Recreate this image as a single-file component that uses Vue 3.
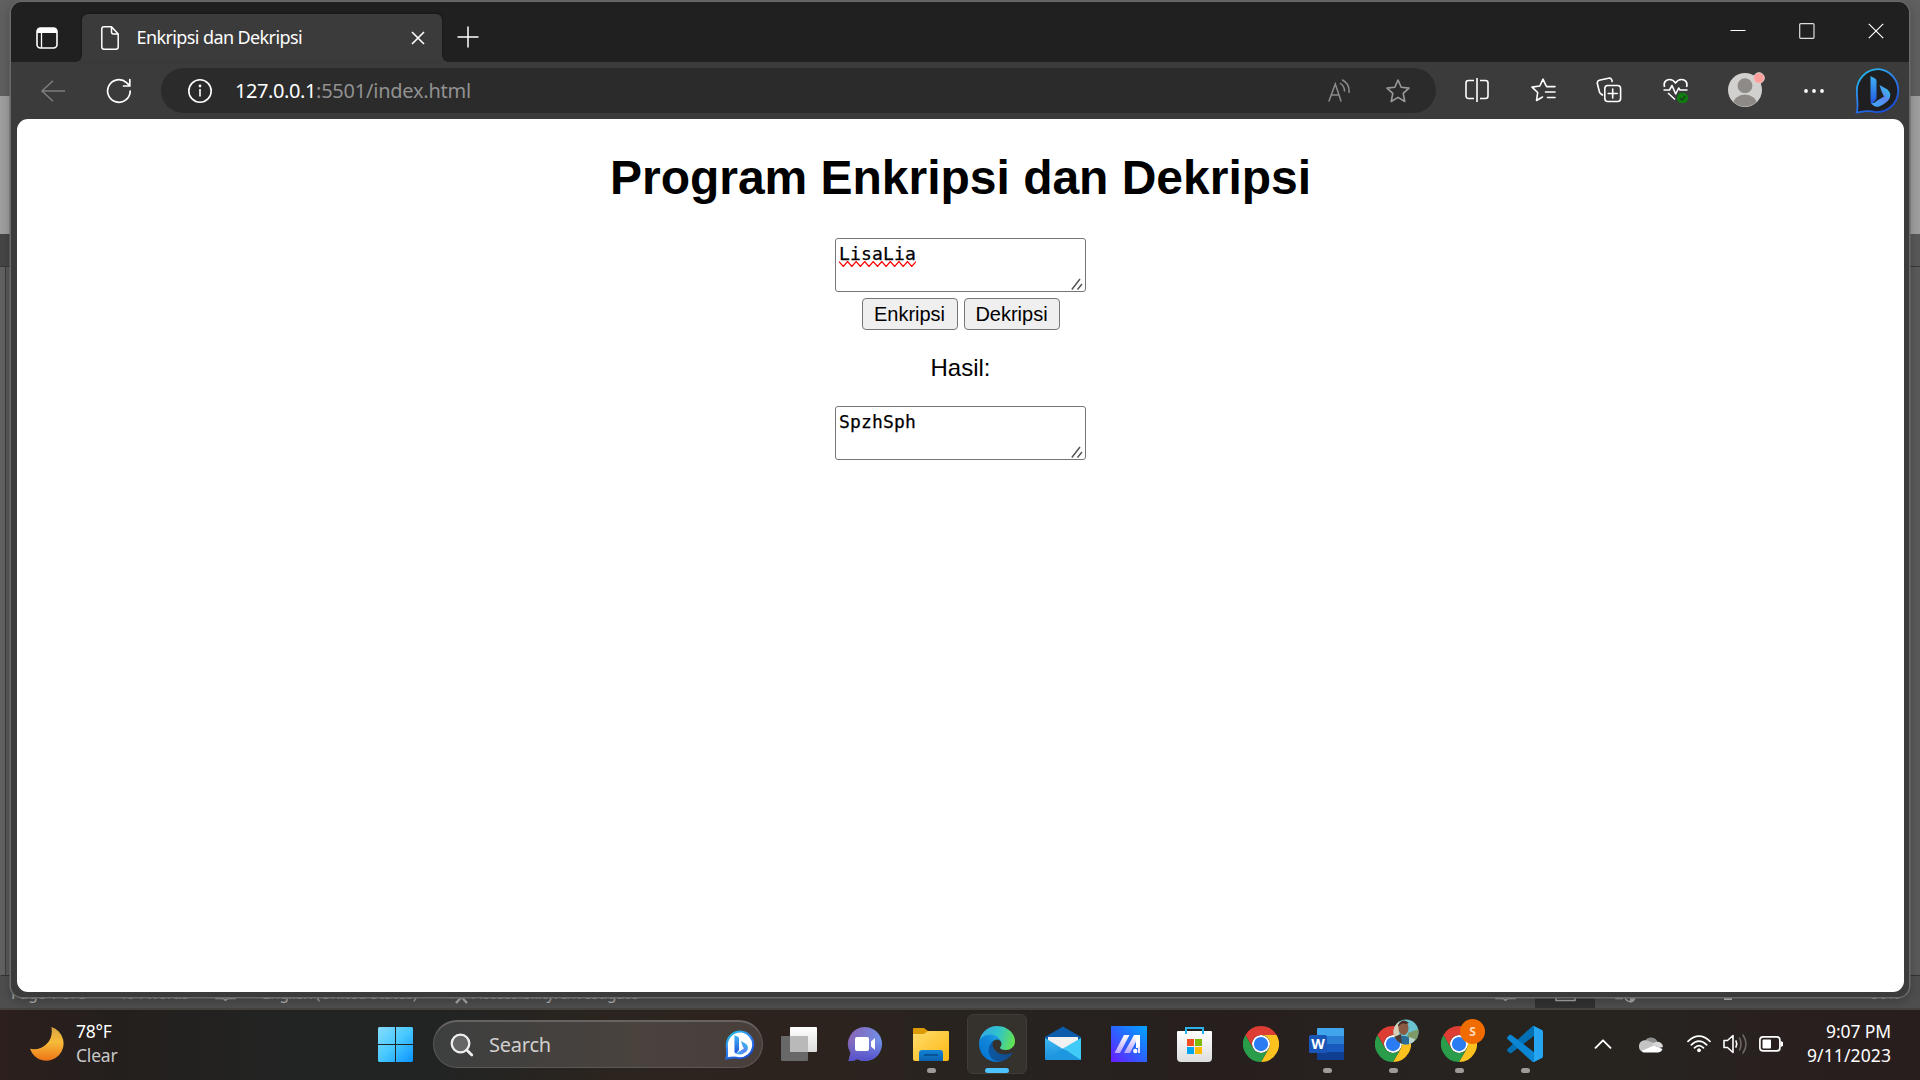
<script setup>
// Stretches or tightens a label so that it fills the given width in pixels.
const vFit = {
  mounted(el, { value }) {
    const width = el.getBoundingClientRect().width
    el.style.letterSpacing = `${(value - width) / el.textContent.length}px`
  },
}

const squiggle = 'M0 .6' + Array.from({ length: 18 }, (_, i) => `L${(i + 1) * 4.28} ${i % 2 ? 0.6 : 5.4}`).join('')

const apps = [
  { id: 'taskview' },
  { id: 'chat' },
  { id: 'files', open: true },
  { id: 'edge', open: true, active: true },
  { id: 'mail' },
  { id: 'asus' },
  { id: 'store' },
  { id: 'chrome' },
  { id: 'word', open: true },
  { id: 'chrome', open: true, badge: 'photo' },
  { id: 'chrome', open: true, badge: 's' },
  { id: 'code', open: true },
]
</script>

<template>
  <div class="screen">
    <svg width="0" height="0" class="defs">
      <defs>
        <linearGradient id="bingRing" x1="0" y1="0" x2="0.6" y2="1">
          <stop offset="0" stop-color="#1fc8e8" /><stop offset="0.5" stop-color="#2f86f0" /><stop offset="1" stop-color="#1a4fd8" />
        </linearGradient>
        <linearGradient id="bingStem" x1="0" y1="0" x2="0" y2="1">
          <stop offset="0" stop-color="#3fb4f7" /><stop offset="1" stop-color="#2153dc" />
        </linearGradient>
        <linearGradient id="bingBowl" x1="0" y1="1" x2="1" y2="0">
          <stop offset="0" stop-color="#3bb0ff" /><stop offset="0.55" stop-color="#5a86f0" /><stop offset="1" stop-color="#1fd6e6" />
        </linearGradient>
      </defs>
    </svg>

    <main class="workspace">
      <div class="backdrop">
        <div class="bd-title"></div>
        <div class="bd-ribbon"></div>
        <div class="bd-ruler"></div>
        <div class="bd-doc"></div>
        <div class="bd-status">
          <span class="st" style="left: 11px"><span v-fit="76">Page 1 of 3</span></span>
          <span class="st" style="left: 118px"><span v-fit="70">404 words</span></span>
          <svg class="st-icon" style="left: 215px" width="21" height="24" viewBox="0 0 21 24"><path d="M1 6V21.500H8.500L10.500 23.500L12.500 21.500H20V6" /></svg>
          <span class="st" style="left: 262px"><span v-fit="155">English (United States)</span></span>
          <svg class="st-icon thick" style="left: 447px" width="24" height="28" viewBox="0 0 24 28"><path d="M1 18L6 21M9 26L14.500 20L20 26" /></svg>
          <span class="st" style="left: 472px"><span v-fit="166">Accessibility: Investigate</span></span>
          <svg class="st-icon" style="left: 1495px" width="21" height="24" viewBox="0 0 21 24"><path d="M1 6V21.500H8.500L10.500 23.500L12.500 21.500H20V6" /></svg>
          <span class="st-sel"></span>
          <svg class="st-icon" style="left: 1555px" width="21" height="26" viewBox="0 0 21 26"><path d="M1 6V23.500H20V6Z" /></svg>
          <svg class="st-icon" style="left: 1615px" width="21" height="26" viewBox="0 0 21 26"><path d="M1 6V21.500H8" /><circle cx="15" cy="19.500" r="5" /><path d="M15 15A5 5 0 0 1 15 25" fill="#aaa" /></svg>
          <span class="st-thumb"></span>
          <span class="st" style="left: 1870px"><span v-fit="30">80%</span></span>
        </div>
      </div>

      <section class="browser">
        <header class="tabs">
          <div class="workspaces">
            <svg width="22" height="22" viewBox="0 0 22 22"><rect x="1" y="1" width="20" height="20" rx="3.500" fill="none" stroke="#fff" stroke-width="1.600" /><path d="M1 6V4a3 3 0 0 1 3-3h14a3 3 0 0 1 3 3v2z" fill="#fff" /><path d="M5.500 6V21" stroke="#fff" stroke-width="1.300" /></svg>
          </div>
          <div class="tab">
            <svg width="18" height="24" viewBox="0 0 18 24" fill="none" stroke="#fff" stroke-width="1.500" stroke-linejoin="round"><path d="M3 .8H10.500L17.200 8V21a2.200 2.200 0 0 1-2.200 2.200H3A2.200 2.200 0 0 1 .8 21V3A2.200 2.200 0 0 1 3 .8ZM10.500 .8V6a2 2 0 0 0 2 2h4.700" /></svg>
            <div class="tab-title"><span v-fit="165.500">Enkripsi dan Dekripsi</span></div>
            <svg width="14" height="14" viewBox="0 0 14 14" stroke="#fff" stroke-width="1.600"><path d="M1 1L13 13M13 1L1 13" /></svg>
          </div>
          <svg class="new-tab" width="22" height="22" viewBox="0 0 22 22" stroke="#fff" stroke-width="1.500"><path d="M11 .5V21.500M.5 11H21.500" /></svg>
          <div class="controls">
            <svg width="16" height="16" viewBox="0 0 16 16"><path d="M.5 7.500H15.500" stroke="#fff" /></svg>
            <svg width="16" height="16" viewBox="0 0 16 16"><rect x=".7" y=".7" width="14.300" height="14.600" rx="1" fill="none" stroke="#ddd" stroke-width="1.200" /></svg>
            <svg width="16" height="16" viewBox="0 0 16 16"><path d="M.8 .8L15.200 15.200M15.200 .8L.8 15.200" stroke="#fff" stroke-width="1.200" /></svg>
          </div>
        </header>

        <nav class="toolbar">
          <div class="cell back"><svg width="26" height="22" viewBox="0 0 26 22" fill="none" stroke="#7d7d7d" stroke-width="1.500"><path d="M13 .8L2 11L13 21.200M2 11H25" /></svg></div>
          <div class="cell reload"><svg width="26" height="26" viewBox="0 0 26 26" fill="none" stroke="#fff" stroke-width="1.700" stroke-linecap="round"><path d="M24.200 13A11.300 11.300 0 1 1 20.500 4.600L23.600 7.600M23.800 1.500V8H17.500" /></svg></div>
          <div class="address">
            <svg width="26" height="26" viewBox="0 0 26 26" fill="none" stroke="#fff" stroke-width="1.600"><circle cx="13" cy="13" r="11.200" /><path d="M13 11V18.500" /><circle cx="13" cy="8" r=".6" /></svg>
            <div class="url"><span class="host" v-fit="81">127.0.0.1</span><span v-fit="155">:5501/index.html</span></div>
            <svg class="aloud" width="26" height="24" viewBox="0 0 26 24" fill="none" stroke="#8c8c8c" stroke-width="1.500" stroke-linecap="round"><path d="M2 22L8.300 5L14 22M4.300 16H12M13.500 4.500C16.500 6.500 17.500 9 17.500 12M15.500 1C21 4 22.500 8.500 22 13.500" /></svg>
            <svg class="fav" width="26" height="26" viewBox="0 0 26 26" fill="none" stroke="#9a9a9a" stroke-width="1.600" stroke-linejoin="round"><path d="M13 2L16.200 9.200L24 10.100L18.200 15.400L19.800 23.500L13 19.400L6.200 23.500L7.800 15.400L2 10.100L9.800 9.200Z" /></svg>
          </div>
          <div class="cell action"><svg width="26" height="26" viewBox="0 0 26 26" fill="none" stroke="#fff" stroke-width="1.600"><path d="M13 1V25M10 3.500H4.500A2.500 2.500 0 0 0 2 6V19A2.500 2.500 0 0 0 4.500 21.500H10M16 3.500H21.500A2.500 2.500 0 0 1 24 6V19A2.500 2.500 0 0 1 21.500 21.500H16" /></svg></div>
          <div class="cell action"><svg width="26" height="26" viewBox="0 0 26 26" fill="none" stroke="#fff" stroke-width="1.600" stroke-linejoin="round" stroke-linecap="round"><path d="M16 8.700L13 2.200L9.800 9L2 10.100L7.700 15.500L6.500 23.500L12.500 20M16.500 9.600H25M15.500 15H25M17.500 20.500H25" /></svg></div>
          <div class="cell action"><svg width="26" height="26" viewBox="0 0 26 26" fill="none" stroke="#fff" stroke-width="1.600" stroke-linejoin="round" stroke-linecap="round"><path d="M6.500 18L4.500 16.500Q3.800 16 3.500 15L1.300 6.500Q1 4 3.200 3.300L12.500 1.200Q15 .8 15.800 3L16.200 4.500" /><rect x="8.800" y="8.500" width="15.800" height="16" rx="3" /><path d="M16.700 12V21M12.200 16.500H21.200" /></svg></div>
          <div class="cell action health"><svg width="28" height="26" viewBox="0 0 28 26" fill="none" stroke="#fff" stroke-width="1.600" stroke-linejoin="round"><path d="M2.500 10C1 5 4.500 2.500 7.500 2.500C10.500 2.500 12.500 4.500 13.500 6C14.500 4.500 16.500 2.500 19.500 2.500C23 2.500 26 5 24.600 10M1.500 13H7.500L10 8.500L13.700 17L16.700 11L18 13H25.500M6 16L13 22.500" /><circle cx="20.500" cy="21" r="5.600" fill="#0f7b0f" stroke="none" /><path d="M18 21.300L19.800 23L23.300 19" stroke="#1d3a1d" stroke-width="1.200" /></svg></div>
          <div class="cell avatar">
            <svg width="38" height="38" viewBox="0 0 38 38"><defs><clipPath id="face"><circle cx="18" cy="20" r="16.500" /></clipPath></defs><circle cx="18" cy="20" r="17" fill="#d2d0ce" /><g clip-path="url(#face)" fill="#8d8a87"><circle cx="18" cy="15.700" r="7.400" /><ellipse cx="18" cy="34.500" rx="12" ry="10" /></g><circle cx="32" cy="8" r="5.300" fill="#ff9f9b" stroke="#e3cfcb" /></svg>
          </div>
          <div class="cell more"><svg width="22" height="6" viewBox="0 0 22 6" fill="#fff"><circle cx="3" cy="3" r="1.900" /><circle cx="11" cy="3" r="1.900" /><circle cx="19" cy="3" r="1.900" /></svg></div>
          <div class="cell bing">
            <svg width="46" height="46" viewBox="0 0 46 46"><path d="M23.500 1.200A21.400 21.400 0 1 1 20 44C14 42 8 43.500 1.800 44.500C3.500 39 2 32 1.800 23A21.600 21.600 0 0 1 23.500 1.200Z" fill="#1f1f21" stroke="url(#bingRing)" stroke-width="1.800" /><path d="M15.500 8L20 10.500Q21.500 11.300 21.500 13V30.500L17 36.500Q15.500 35 15.500 32.500Z" fill="url(#bingStem)" /><path d="M24.500 17L32.500 21.500Q36.500 25 34.500 30.500Q32 35 24 38.500Q19 39.500 16 35Q19 36 21.500 33L29 28.500L26.500 23.500Z" fill="url(#bingBowl)" /></svg>
          </div>
        </nav>

        <article class="page">
          <h1><span v-fit="701">Program Enkripsi dan Dekripsi</span></h1>
          <div class="field">
            <span v-fit="77">LisaLia</span>
            <svg class="squiggle" width="77" height="6" viewBox="0 0 77 6" fill="none" stroke="#f00" stroke-width="1.300"><path :d="squiggle" /></svg>
            <svg class="grip" width="12" height="12" viewBox="0 0 12 12" stroke="#555" stroke-width="1.500"><path d="M.8 11.500L9 1M6.500 11.500L11 6" /></svg>
          </div>
          <div class="buttons">
            <button type="button">Enkripsi</button>
            <button type="button">Dekripsi</button>
          </div>
          <p>Hasil:</p>
          <div class="field">
            <span v-fit="77">SpzhSph</span>
            <svg class="grip" width="12" height="12" viewBox="0 0 12 12" stroke="#555" stroke-width="1.500"><path d="M.8 11.500L9 1M6.500 11.500L11 6" /></svg>
          </div>
        </article>
      </section>
    </main>

    <footer class="taskbar">
      <div class="weather">
        <svg width="36" height="36" viewBox="0 0 36 36"><defs><linearGradient id="moon" x1="0" y1="0" x2="0" y2="1"><stop offset="0" stop-color="#d9a441" /><stop offset=".45" stop-color="#f6bb3a" /><stop offset="1" stop-color="#ee7416" /></linearGradient></defs><path d="M22.300 1A17.200 17.200 0 1 1 1 22.800C14 25.500 25.500 14 22.300 1Z" fill="url(#moon)" /></svg>
        <div class="lines"><div class="bright"><span v-fit="35.500">78°F</span></div><div><span v-fit="41.500">Clear</span></div></div>
      </div>

      <div class="start">
        <svg width="35" height="35" viewBox="0 0 35 35"><defs><linearGradient id="win" gradientUnits="userSpaceOnUse" x1="0" y1="0" x2="35" y2="35"><stop offset="0" stop-color="#86dcff" /><stop offset=".5" stop-color="#47c8ff" /><stop offset="1" stop-color="#0a93ff" /></linearGradient></defs><path d="M1 0H17V17H0V1ZM18 0H34L35 1V17H18ZM0 18H17V35H1L0 34ZM18 18H35V34L34 35H18Z" fill="url(#win)" /></svg>
      </div>

      <div class="search">
        <svg width="24" height="24" viewBox="0 0 24 24" fill="#666" stroke="#efefef" stroke-width="2.300" stroke-linecap="round"><circle cx="10.500" cy="10.500" r="8.800" /><path d="M16.800 17L21.800 22" stroke-width="2.800" /></svg>
        <div class="search-label"><span v-fit="62">Search</span></div>
        <svg width="30" height="30" viewBox="0 0 46 46"><path d="M23.500 2.200A20.500 20.500 0 1 1 20 43C14 41 8 42.500 2.200 43.500C4 38 3 32 2.800 23A20.600 20.600 0 0 1 23.500 2.200Z" fill="#fff" stroke="url(#bingRing)" stroke-width="3.200" /><path d="M14.500 8L20 10.500Q21.500 11.300 21.500 13V30.500L17 36.500Q14.500 35 14.500 32.500Z" fill="url(#bingStem)" /><path d="M24.500 17L32.500 21.500Q36.500 25 34.500 30.500Q32 35 24 37.500Q19 38.500 16 35Q19 36 21.500 33L29 28.500L26.500 23.500Z" fill="url(#bingBowl)" /></svg>
      </div>

      <div class="apps">
        <div v-for="(app, i) in apps" :key="i" class="app" :class="{ active: app.active }">
          <svg v-if="app.id === 'taskview'" width="36" height="36" viewBox="0 0 36 36"><defs><linearGradient id="tv" x1="0" y1="0" x2="0" y2="1"><stop offset="0" stop-color="#fff" /><stop offset="1" stop-color="#dcdcdc" /></linearGradient></defs><rect x="0" y="10" width="27" height="25" rx="1" fill="#686868" /><rect x="9" y="1" width="27" height="25" rx="1" fill="url(#tv)" /><path d="M9 10H27V26H10L9 25Z" fill="#b9b9b9" /></svg>

          <svg v-else-if="app.id === 'chat'" width="36" height="36" viewBox="0 0 36 36"><defs><linearGradient id="chat" x1="0" y1="0" x2="1" y2=".3"><stop offset="0" stop-color="#8a5fb0" /><stop offset="1" stop-color="#7091ea" /></linearGradient><linearGradient id="chat2" x1="0" y1="0" x2="0" y2="1"><stop offset=".4" stop-color="#5b55c8" stop-opacity="0" /><stop offset="1" stop-color="#5650cc" /></linearGradient></defs><path d="M18 1A17 17 0 1 1 10 33C7 35 4 35 1.500 35L3.500 27A17 17 0 0 1 18 1Z" fill="url(#chat)" /><path d="M18 1A17 17 0 1 1 10 33C7 35 4 35 1.500 35L3.500 27A17 17 0 0 1 18 1Z" fill="url(#chat2)" /><rect x="8" y="11" width="14" height="14" rx="2" fill="#fff" /><path d="M24 15.500L28 12V24L24 20.500Z" fill="#fff" /></svg>

          <svg v-else-if="app.id === 'files'" width="36" height="36" viewBox="0 0 36 36"><defs><linearGradient id="fold" x1="0" y1="0" x2="1" y2="1"><stop offset="0" stop-color="#ffdc6b" /><stop offset="1" stop-color="#fdb813" /></linearGradient><linearGradient id="dock" x1="0" y1="0" x2="0" y2="1"><stop offset="0" stop-color="#1283d8" /><stop offset="1" stop-color="#0b62ad" /></linearGradient></defs><path d="M0 3Q0 2 1 2H11L15 5V10H0Z" fill="#dc9b05" /><path d="M0 8H11L15 5H35Q36 5 36 6V33Q36 35 34 35H2Q0 35 0 33Z" fill="url(#fold)" /><path d="M6 35V27Q6 24 9 24H27Q30 24 30 27V35Z" fill="url(#dock)" /><path d="M11 29H25" stroke="#064a86" stroke-width="1.500" /></svg>

          <svg v-else-if="app.id === 'edge'" width="36" height="36" viewBox="4.600 4.900 256 256"><defs><linearGradient id="eA" gradientUnits="userSpaceOnUse" x1="63" y1="182" x2="241" y2="182"><stop offset="0" stop-color="#0c59a4" /><stop offset="1" stop-color="#114a8b" /></linearGradient><linearGradient id="eB" gradientUnits="userSpaceOnUse" x1="157" y1="104" x2="46" y2="225"><stop offset="0" stop-color="#1b9de2" /><stop offset=".4" stop-color="#1186d8" /><stop offset="1" stop-color="#0678d4" /></linearGradient><linearGradient id="eC" gradientUnits="userSpaceOnUse" x1="20" y1="60" x2="255" y2="130"><stop offset="0" stop-color="#35aadf" /><stop offset=".45" stop-color="#2fc2cf" /><stop offset="1" stop-color="#66e34c" /></linearGradient></defs><path d="M235.680 195.460a93.730 93.730 0 0 1-10.540 4.710 101.870 101.870 0 0 1-35.900 6.460c-47.320 0-88.540-32.550-88.540-74.320A31.480 31.480 0 0 1 117.130 105c-42.800 1.800-53.800 46.400-53.800 72.530 0 73.880 68.090 81.370 82.760 81.370 7.910 0 19.840-2.300 27-4.560l1.310-.44a128.340 128.340 0 0 0 66.600-52.800 4 4 0 0 0-5.320-5.640z" fill="url(#eA)" /><path d="M110.340 246.340A79.200 79.200 0 0 1 87.600 225a80.720 80.720 0 0 1 29.530-120c3.120-1.470 8.450-4.130 15.540-4a32.350 32.350 0 0 1 25.690 13 31.880 31.880 0 0 1 6.360 18.660c0-.21 24.460-79.600-80-79.600-43.900 0-80 41.660-80 78.210a130.150 130.150 0 0 0 12.110 56 128 128 0 0 0 156.380 67.110 75.550 75.550 0 0 1-62.780-8z" fill="url(#eB)" /><path d="M156.940 153.780c-.81 1.050-3.300 2.500-3.300 5.660 0 2.610 1.700 5.120 4.720 7.230 14.380 10 41.490 8.680 41.560 8.680a59.560 59.560 0 0 0 30.270-8.350 61.380 61.380 0 0 0 30.430-52.880c.26-22.410-8-37.310-11.340-43.910-21.190-41.450-66.930-65.290-116.670-65.290a128 128 0 0 0-128 126.200c.48-36.540 36.800-66.050 80-66.050 3.500 0 23.460.34 42 10.070 16.340 8.580 24.900 18.940 30.850 29.210 6.180 10.670 7.280 24.150 7.280 29.520s-2.740 13.330-7.800 19.910z" fill="url(#eC)" /></svg>

          <svg v-else-if="app.id === 'mail'" width="36" height="36" viewBox="0 0 36 36"><defs><linearGradient id="ml" x1="0" y1="0" x2="0" y2="1"><stop offset="0" stop-color="#3bb8f2" /><stop offset="1" stop-color="#1a8fdc" /></linearGradient></defs><path d="M0 11L18 .5L36 11V14H0Z" fill="#0b5cab" /><path d="M3 11H33V15L18 26L3 15Z" fill="#f1f1f1" /><path d="M0 12L36 34H1Q0 34 0 33Z" fill="url(#ml)" /><path d="M36 12V33Q36 34 35 34L18 22.500Z" fill="#3fcaf8" /><path d="M18 22.500L36 34H1L18 22.500Z" fill="#1d97e0" /></svg>

          <svg v-else-if="app.id === 'asus'" width="36" height="36" viewBox="0 0 36 36"><defs><linearGradient id="as" x1="0" y1="1" x2="1" y2="0"><stop offset="0" stop-color="#6a1cff" /><stop offset=".5" stop-color="#2b63ff" /><stop offset="1" stop-color="#00a5ff" /></linearGradient><linearGradient id="as2" x1="0" y1="1" x2="0" y2="0"><stop offset="0" stop-color="#b9a2ff" /><stop offset="1" stop-color="#fff" /></linearGradient></defs><rect width="36" height="36" fill="url(#as)" /><path d="M3.500 27L13 9H18.500L9 27ZM13 27L23 9H28.500L19 27Z" fill="url(#as2)" /><path d="M23.500 9H29V22H25V14Z" fill="#fff" /><circle cx="24.300" cy="25" r="2.200" fill="#fff" /><path d="M27 21H29V27H27Z" fill="#e8e0ff" /></svg>

          <svg v-else-if="app.id === 'store'" width="36" height="36" viewBox="0 0 36 36"><defs><linearGradient id="sto" x1="0" y1="0" x2="0" y2="1"><stop offset="0" stop-color="#fff" /><stop offset="1" stop-color="#dedede" /></linearGradient></defs><path d="M0 6Q0 5 1 5H34Q35 5 35 6V32Q35 36 31 36H4Q0 36 0 32Z" fill="url(#sto)" /><path d="M9 8V2H26V8" fill="none" stroke="#2cb2ea" stroke-width="2" /><path d="M10 13H17V20H10Z" fill="#f25022" /><path d="M18 13H25V20H18Z" fill="#7fba00" /><path d="M10 21H17V28H10Z" fill="#00a4ef" /><path d="M18 21H25V28H18Z" fill="#ffb900" /></svg>

          <svg v-else-if="app.id === 'chrome'" width="36" height="36" viewBox="0 0 48 48"><circle cx="24" cy="24" r="12" fill="#fff" /><path d="M24,12H44.7812a23.9939,23.9939,0,0,0-41.5639.0029L13.6079,30l.0093-.0024A11.9852,11.9852,0,0,1,24,12Z" fill="#de3d33" /><circle cx="24" cy="24" r="9.500" fill="#2b7bf3" /><path d="M34.3913,30.0029,24.0007,48A23.994,23.994,0,0,0,44.78,12.0031H23.9989l-.0025.0093A11.985,11.985,0,0,1,34.3913,30.0029Z" fill="#fbc11f" /><path d="M13.6086,30.0031,3.218,12.006A23.994,23.994,0,0,0,24.0025,48L34.3931,30.0029l-.0067-.0068a11.9852,11.9852,0,0,1-20.7778.007Z" fill="#2a9d4b" /></svg>

          <div v-else-if="app.id === 'word'" class="word">
            <svg width="36" height="36" viewBox="0 0 36 36"><path d="M8 3Q8 2 9 2H34Q35 2 35 3V10H8Z" fill="#41a5ee" /><path d="M8 10H35V18H8Z" fill="#2b7cd3" /><path d="M8 18H35V26H8Z" fill="#185abd" /><path d="M8 26H35V33Q35 34 34 34H9Q8 34 8 33Z" fill="#103f91" /><rect x="0" y="9" width="18" height="18" rx="1.500" fill="#1a56b8" /></svg>
            <b>W</b>
          </div>

          <svg v-else width="36" height="36" viewBox="0 0 100 100"><path d="M96.461 10.796L75.857 .876C73.472 -.273 70.622 .212 68.750 2.083L1.299 63.583C-.516 65.237 -.514 68.094 1.303 69.745L6.813 74.754C8.298 76.104 10.535 76.204 12.134 74.991L93.361 13.370C96.086 11.303 100 13.246 100 16.667V16.428C100 14.027 98.625 11.838 96.461 10.796Z" fill="#0070b3" /><path d="M96.461 89.204L75.857 99.125C73.472 100.273 70.622 99.788 68.750 97.917L1.299 36.417C-.516 34.763 -.514 31.906 1.303 30.255L6.813 25.246C8.298 23.896 10.535 23.796 12.134 25.010L93.361 86.630C96.086 88.697 100 86.754 100 83.333V83.573C100 85.974 98.625 88.162 96.461 89.204Z" fill="#0a86d4" /><path d="M75.858 99.126C73.472 100.274 70.622 99.789 68.750 97.917C71.056 100.223 75 98.590 75 95.328V4.672C75 1.410 71.056 -.223 68.750 2.083C70.622 .211 73.472 -.274 75.858 .874L96.459 10.781C98.623 11.822 100 14.011 100 16.413V83.587C100 85.989 98.623 88.179 96.459 89.220L75.858 99.126Z" fill="#26a5f2" /></svg>

          <svg v-if="app.badge === 'photo'" class="badge" width="26" height="26" viewBox="0 0 26 26"><defs><clipPath id="ph"><circle cx="13" cy="13" r="12.500" /></clipPath></defs><g clip-path="url(#ph)"><rect width="26" height="26" fill="#6cc3d0" /><path d="M0 8L6 2V22H0Z" fill="#d8cdb6" /><path d="M15 14L26 10V22H14Z" fill="#7d9a68" /><ellipse cx="10.500" cy="9" rx="5" ry="7" fill="#8a5a44" /><path d="M5 6Q10 -2 16 4L13 5Q8 3 5 8Z" fill="#4a2d25" /><path d="M3 26Q5 15 11 17Q18 17 19 26Z" fill="#2b6c96" /><path d="M1 18L8 15L9 26H3Z" fill="#4a3b34" /><path d="M16 18L22 20L20 25H16Z" fill="#b9d3cd" /></g></svg>
          <div v-if="app.badge === 's'" class="badge s-badge">S</div>
          <i v-if="app.open" class="dot"></i>
        </div>
      </div>

      <div class="tray">
        <svg class="chev" width="18" height="10" viewBox="0 0 18 10" fill="none" stroke="#fff" stroke-width="1.900" stroke-linecap="round" stroke-linejoin="round"><path d="M1.500 8.800L9 1.300L16.500 8.800" /></svg>
        <svg class="cloud" width="24" height="17" viewBox="0 0 24 17"><path d="M6 5A7 7 0 0 1 18.500 6L12 11Z" fill="#8f8f8f" /><path d="M0 11A6 6 0 0 1 8 4.600Q14 6 18 10L5 16A5 5 0 0 1 0 11Z" fill="#c4c4c4" /><path d="M17 6A5.500 5.500 0 0 1 24 11L20 12L13 7.500Z" fill="#d8d8d8" /><path d="M2.500 15L15 9.500L23.500 13Q22.500 16 19 16.500H5.500Q3.500 16.500 2.500 15Z" fill="#fff" /></svg>
        <svg class="wifi" width="24" height="18" viewBox="0 0 24 18" fill="none" stroke="#fff" stroke-width="1.700" stroke-linecap="round"><path d="M1 6.300Q12 -4 23 6.300M4.300 9.800Q12 2.500 19.700 9.800M7.500 12.800Q12 8.300 16.500 12.800" /><circle cx="12" cy="15.300" r="1.500" fill="#fff" stroke-width="1" /></svg>
        <svg class="vol" width="26" height="22" viewBox="0 0 26 22" fill="none" stroke-width="1.600" stroke-linecap="round" stroke-linejoin="round"><path d="M1 7.500H4.500L10 2.500V19.500L4.500 14.500H1ZM13 8Q14.600 11 13 14" stroke="#fff" /><path d="M16.500 5Q19.500 11 16.500 17M20 2Q26 11 20 20" stroke="#6c6866" /></svg>
        <svg class="batt" width="25" height="16" viewBox="0 0 25 16"><rect x=".9" y=".9" width="20" height="14" rx="3.200" fill="none" stroke="#fff" stroke-width="1.700" /><rect x="3.500" y="3.500" width="8.500" height="9" rx="1" fill="#fff" /><path d="M21.500 5L24 6V10L21.500 11Z" fill="#fff" /></svg>
        <div class="clock"><div><span v-fit="65">9:07 PM</span></div><div><span v-fit="84">9/11/2023</span></div></div>
      </div>
    </footer>
  </div>
</template>

<style>
body {
  margin: 0;
  background: #222;
}
</style>

<style scoped>
.screen {
  width: 1920px;
  height: 1080px;
  display: flex;
  flex-direction: column;
  overflow: hidden;
  font-family: "Noto Sans", "Open Sans", sans-serif;
  color: #fff;
  white-space: nowrap;
}
.defs { position: absolute; }
svg { display: block; flex: none; }
span { display: inline-block; }

.workspace {
  position: relative;
  height: 1010px;
  box-sizing: border-box;
  padding: 2px 11px 13px;
  flex: none;
}
.backdrop {
  position: absolute;
  inset: 0;
  display: flex;
  flex-direction: column;
  overflow: hidden;
}
.bd-title { height: 96px; background: #606060; }
.bd-ribbon { height: 138px; background: #9f9f9f; }
.bd-ruler { height: 32px; background: linear-gradient(90deg, #464646 50%, #595959 50%); border-bottom: 1px solid #383838; }
.bd-doc { height: 708px; background: #5a5a5a; border-left: 1px solid #606060; box-shadow: inset 4px 0 #626262, inset 5px 0 #3c3c3c; border-bottom: 1px solid #333; }
.bd-status { position: relative; flex: 1; background: #4e4e4e; border-bottom: 2px solid #45423e; }
.st { position: absolute; top: 6px; font-size: 15.500px; line-height: 22px; color: #b0b0b0; }
.st-icon { position: absolute; top: 1px; fill: none; stroke: #aaa; stroke-width: 1.500; }
.st-icon.thick { stroke-width: 2.500; }
.st-sel { position: absolute; left: 1535px; top: 0; width: 60px; height: 32px; background: #323232; }
.st-thumb { position: absolute; left: 1724px; top: 10px; width: 8px; height: 14px; background: #bbb; }

.browser {
  position: relative;
  height: 995px;
  display: flex;
  flex-direction: column;
  background: #3b3b3b;
  border-radius: 11px;
  box-shadow: 0 0 0 1.500px #6a6a6a, 0 3px 12px rgba(0, 0, 0, .3);
  overflow: visible;
}
.tabs {
  height: 60px;
  flex: none;
  display: flex;
  background: #202020;
  border-radius: 11px 11px 0 0;
  padding-right: 25px;
}
.workspaces { width: 71px; box-sizing: border-box; padding: 25px 0 0 25px; }
.tab {
  position: relative;
  width: 360px;
  height: 48px;
  box-sizing: border-box;
  margin-top: 12px;
  padding: 0 17px 0 19px;
  display: flex;
  align-items: center;
  background: #3b3b3b;
  border-radius: 6px 6px 0 0;
  box-shadow: 0 -1px 3px rgba(0, 0, 0, .35);
}
.tab::before,
.tab::after {
  content: "";
  position: absolute;
  bottom: 0;
  width: 6px;
  height: 6px;
}
.tab::before { left: -6px; background: radial-gradient(circle at 0 0, #202020 5.500px, #3b3b3b 6px); }
.tab::after { right: -6px; background: radial-gradient(circle at 100% 0, #202020 5.500px, #3b3b3b 6px); }
.tab-title { flex: 1; margin: 0 0 2px 17.500px; font-size: 18px; line-height: 24px; }
.new-tab { margin: 24px 0 0 15px; }
.controls { margin: 21px 0 0 auto; display: flex; gap: 53px; }

.toolbar { height: 57px; flex: none; display: flex; align-items: center; }
.cell { display: flex; justify-content: center; align-items: center; }
.back { width: 84px; }
.reload { width: 48px; margin-right: 18px; }
.address {
  width: 1275px;
  height: 45px;
  box-sizing: border-box;
  display: flex;
  align-items: center;
  padding: 0 25px 0 26px;
  background: #2b2b2b;
  border-radius: 23px;
  margin-right: 8px;
}
.url { flex: 1; margin-left: 22px; font-size: 20px; line-height: 28px; color: #919191; }
.url .host { color: #fff; }
.aloud { margin-right: 32px; }
.action { width: 66px; }
.action svg { margin-bottom: 1px; }
.health svg { margin-left: 1px; }
.avatar { width: 73px; }
.avatar svg { margin: 0 0 3px 2px; }
.more { width: 65px; }
.bing { width: 63px; }

.page {
  flex: 1;
  margin: 0 5px 5px 6px;
  border-radius: 11px;
  background: #fff;
  color: #000;
  font-family: "Liberation Sans", Arial, sans-serif;
  font-size: 24px;
  display: flex;
  flex-direction: column;
  align-items: center;
}
h1 { margin: 31px 0 33px; font-size: 48px; line-height: 55px; font-weight: bold; }
p { margin: 24px 0; line-height: 28px; }
.field {
  position: relative;
  width: 251px;
  height: 54px;
  box-sizing: border-box;
  border: 1px solid #767676;
  border-radius: 3px;
  padding: 4px 3px;
  font-family: "DejaVu Sans Mono", monospace;
  font-size: 18px;
  line-height: 22px;
  -webkit-text-stroke: .25px #000;
}
.squiggle { position: absolute; left: 3px; top: 22px; }
.grip { position: absolute; right: 2px; bottom: 1px; }
.buttons { display: flex; gap: 6px; margin-top: 6px; }
button {
  width: 96px;
  height: 32px;
  padding: 0;
  box-sizing: border-box;
  border: 1px solid #767676;
  border-radius: 4px;
  background: #efefef;
  color: #000;
  font: 20px/28px "Liberation Sans", Arial, sans-serif;
}

.taskbar {
  height: 70px;
  flex: none;
  display: flex;
  background: linear-gradient(90deg, #2c1f1d 0, #241f1d 110px, #222423 290px, #222423 440px, #2c241e 620px, #2d231e 800px, #27231f 1000px, #271f1e 1230px, #272420 1480px, #272420 1640px, #291e1e 1840px, #291e1e 100%);
}
.weather { width: 347px; padding-left: 29px; display: flex; box-sizing: border-box; }
.weather svg { margin-top: 16px; }
.lines { margin: 8.500px 0 0 11px; font-size: 17.500px; line-height: 24px; color: #c8c8c8; }
.bright { color: #fff; }
.start { width: 86px; box-sizing: border-box; padding: 17px 0 0 31px; }
.search {
  width: 330px;
  height: 48px;
  box-sizing: border-box;
  margin: 10px 3px 0 0;
  padding: 0 7px 0 16px;
  border: 1px solid #5b5855;
  border-top: 2px solid #666362;
  border-radius: 24px;
  display: flex;
  align-items: center;
  background: linear-gradient(90deg, #3d3f3f, #49423d 60%, #483f3b);
}
.search-label { flex: 1; margin-left: 15px; font-size: 20px; line-height: 28px; color: #d2d0cf; }
.apps { display: flex; }
.app { position: relative; width: 66px; height: 70px; box-sizing: border-box; padding: 16px 15px 0; }
.app.active::before {
  content: "";
  position: absolute;
  left: 3px;
  top: 4px;
  width: 60px;
  height: 60px;
  box-sizing: border-box;
  border: 1px solid #403c39;
  border-radius: 6px;
  background: #35312d;
}
.app > svg { position: relative; }
.dot { position: absolute; left: 28.500px; top: 58px; width: 9px; height: 5px; border-radius: 3px; background: #9f9b99; }
.active .dot { left: 21px; width: 24px; background: #4cc2ff; }
.app > .badge { position: absolute; left: 33px; top: 9px; }
.app > .s-badge {
  left: 34px;
  width: 25px;
  height: 25px;
  border-radius: 50%;
  background: #f06c00;
  color: #ffd9bd;
  font-size: 12px;
  font-weight: bold;
  line-height: 25px;
  text-align: center;
}
.word { position: relative; }
.word b { position: absolute; left: 0; top: 9px; width: 18px; font: bold 14px/18px "Open Sans", sans-serif; text-align: center; }

.tray { flex: 1; display: flex; padding-left: 36px; }
.chev { margin-top: 28.500px; }
.cloud { margin: 26px 0 0 27px; }
.wifi { margin: 25px 0 0 24px; }
.vol { margin: 23px 0 0 12px; }
.batt { margin: 26px 0 0 10px; }
.clock { margin: 8.500px 29px 0 auto; font-size: 17.500px; line-height: 24px; text-align: right; }
</style>
